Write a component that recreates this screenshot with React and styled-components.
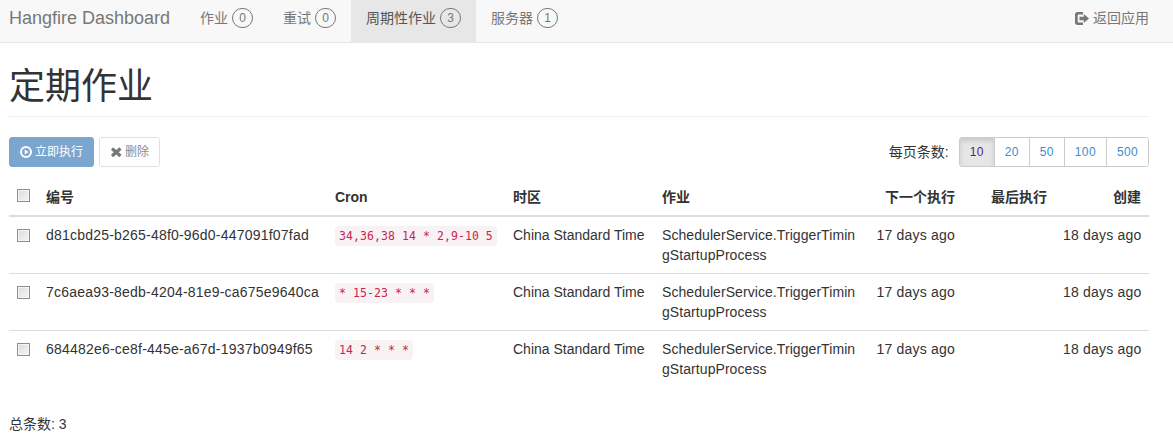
import React from 'react';
import styled, { createGlobalStyle } from 'styled-components';

const GlobalStyle = createGlobalStyle`
  html, body {
    margin: 0;
    padding: 0;
    background: #fff;
    color: #333;
    font-family: "Liberation Sans", "Noto Sans CJK SC", sans-serif;
    font-size: 14px;
    line-height: 20px;
  }
  * {
    box-sizing: border-box;
  }
`;

const navItems = [
  { label: '作业', count: 0 },
  { label: '重试', count: 0 },
  { label: '周期性作业', count: 3, active: true },
  { label: '服务器', count: 1 },
];

const pageSizes = [10, 20, 50, 100, 500];

const jobs = [
  { id: 'd81cbd25-b265-48f0-96d0-447091f07fad', cron: '34,36,38 14 * 2,9-10 5' },
  { id: '7c6aea93-8edb-4204-81e9-ca675e9640ca', cron: '* 15-23 * * *' },
  { id: '684482e6-ce8f-445e-a67d-1937b0949f65', cron: '14 2 * * *' },
];

const LogOutIcon = () => (
  <svg width="14" height="13" viewBox="0 0 14 13" fill="#777">
    <path d="M0 2.500C0 1.100 1.100 0 2.500 0H8v2.500H3.500C3 2.500 2.700 2.800 2.700 3.300v6.400c0 .5.3.8.8.8H8V13H2.500C1.100 13 0 11.900 0 10.500z" />
    <path d="M4.500 4.700h4.300V2L14 6.500 8.800 11V8.300H4.500z" />
  </svg>
);

const PlayCircleIcon = () => (
  <svg width="12" height="12" viewBox="0 0 12 12">
    <circle cx="6" cy="6" r="5" fill="none" stroke="#fff" strokeWidth="2" />
    <path d="M4.600 3.400 8.600 6l-4 2.600z" fill="#fff" />
  </svg>
);

const RemoveIcon = () => (
  <svg width="12" height="12" viewBox="0 0 12 12">
    <path d="M2 2.500 10.500 10M10.500 2.500 2 10" fill="none" stroke="#777" strokeWidth="3.200" />
  </svg>
);

export default function App() {
  return (
    <>
      <GlobalStyle />
      <Navbar>
        <Brand>Hangfire Dashboard</Brand>
        <NavList>
          {navItems.map((item) => (
            <NavItem key={item.label} $active={item.active}>
              {item.label}
              <Badge>{item.count}</Badge>
            </NavItem>
          ))}
        </NavList>
        <BackLink>
          <LogOutIcon />
          返回应用
        </BackLink>
      </Navbar>

      <Page>
        <Title>定期作业</Title>

        <Toolbar>
          <PrimaryButton>
            <PlayCircleIcon />
            立即执行
          </PrimaryButton>
          <DefaultButton>
            <RemoveIcon />
            删除
          </DefaultButton>
          <PageSizer>
            <PageSizeLabel>每页条数:</PageSizeLabel>
            <PageSizeGroup>
              {pageSizes.map((size) => (
                <PageSizeButton key={size} $active={size === 10}>
                  {size}
                </PageSizeButton>
              ))}
            </PageSizeGroup>
          </PageSizer>
        </Toolbar>

        <Table>
          <colgroup>
            <col width="29" />
            <col width="289" />
            <col width="178" />
            <col width="149" />
            <col width="210" />
            <col width="99" />
            <col width="92" />
            <col width="94" />
          </colgroup>
          <thead>
            <tr>
              <Th><Check /></Th>
              <Th>编号</Th>
              <Th>Cron</Th>
              <Th>时区</Th>
              <Th>作业</Th>
              <Th $right>下一个执行</Th>
              <Th $right>最后执行</Th>
              <Th $right>创建</Th>
            </tr>
          </thead>
          <tbody>
            {jobs.map((job) => (
              <tr key={job.id}>
                <Td><Check /></Td>
                <IdCell>{job.id}</IdCell>
                <Td><Code>{job.cron}</Code></Td>
                <Td>China Standard Time</Td>
                <JobCell>SchedulerService.TriggerTimingStartupProcess</JobCell>
                <AgoCell $right>17 days ago</AgoCell>
                <Td $right></Td>
                <AgoCell $right>18 days ago</AgoCell>
              </tr>
            ))}
          </tbody>
        </Table>

        <Total>总条数: 3</Total>
      </Page>
    </>
  );
}

const Navbar = styled.nav`
  display: flex;
  align-items: stretch;
  height: 43px;
  padding: 0 9px;
  background: #f8f8f8;
  border-bottom: 1px solid #e7e7e7;
`;

const Brand = styled.a`
  display: flex;
  align-items: center;
  margin-right: 15px;
  padding-bottom: 6px;
  font-size: 18px;
  color: #777;
`;

const NavList = styled.ul`
  display: flex;
  margin: 0;
  padding: 0;
  list-style: none;
`;

const NavItem = styled.li`
  display: flex;
  align-items: center;
  padding: 0 15px 6px;
  color: ${(p) => (p.$active ? '#555' : '#777')};
  background: ${(p) => (p.$active ? '#e7e7e7' : 'transparent')};
`;

const Badge = styled.span`
  display: inline-flex;
  justify-content: center;
  align-items: center;
  min-width: 21px;
  height: 20px;
  margin-left: 4px;
  padding: 0 4px;
  border: 1px solid #777;
  border-radius: 10px;
  font-size: 12px;
  color: #777;
`;

const BackLink = styled.a`
  display: flex;
  align-items: center;
  gap: 4px;
  margin-left: auto;
  padding: 0 15px 6px;
  color: #777;
`;

const Page = styled.main`
  padding: 0 24px 0 9px;
`;

const Title = styled.h1`
  margin: 22px 0 20px;
  padding-bottom: 7px;
  border-bottom: 1px solid #eee;
  font-size: 36px;
  font-weight: 400;
  line-height: 44px;
  color: #333;
`;

const Toolbar = styled.div`
  display: flex;
  align-items: center;
  gap: 5px;
  height: 30px;
`;

const PrimaryButton = styled.button`
  display: inline-flex;
  align-items: center;
  gap: 3px;
  height: 30px;
  padding: 0 10px;
  border: 1px solid #7aa6cf;
  border-radius: 3px;
  background: #7aa6cf;
  color: #fff;
  font: inherit;
  font-size: 12px;
`;

const DefaultButton = styled.button`
  display: inline-flex;
  align-items: center;
  gap: 3px;
  height: 30px;
  padding: 0 10px;
  border: 1px solid #e0e0e0;
  border-radius: 3px;
  background: #fff;
  color: #8a8a8a;
  font: inherit;
  font-size: 12px;
`;

const PageSizer = styled.div`
  display: flex;
  align-items: center;
  gap: 10px;
  margin-left: auto;
`;

const PageSizeLabel = styled.span`
  font-size: 14px;
  color: #333;
`;

const PageSizeGroup = styled.div`
  display: flex;
  height: 30px;
  border: 1px solid #ccc;
  border-radius: 3px;
  overflow: hidden;
`;

const PageSizeButton = styled.a`
  display: flex;
  justify-content: center;
  align-items: center;
  padding: 0 10px;
  font-size: 12px;
  letter-spacing: 0.35px;
  color: ${(p) => (p.$active ? '#551a8b' : '#428bca')};
  background: ${(p) => (p.$active ? '#e6e6e6' : '#fff')};
  box-shadow: ${(p) => (p.$active ? 'inset 0 3px 5px rgba(0, 0, 0, 0.125)' : 'none')};
  & + & {
    border-left: 1px solid #ccc;
  }
`;

const Table = styled.table`
  width: 1140px;
  margin-top: 10px;
  table-layout: fixed;
  border-collapse: collapse;
`;

const Check = styled.input.attrs({ type: 'checkbox' })`
  appearance: none;
  display: block;
  width: 13px;
  height: 13px;
  margin: 4px 0 0;
  border: 1px solid #8e8f8f;
  background: linear-gradient(135deg, #dcdcdc, #f6f6f6);
  box-shadow: inset 0 0 0 1px #f4f4f4;
`;

const Th = styled.th`
  height: 39px;
  padding: 9px 8px 7px;
  border-bottom: 2px solid #ddd;
  text-align: ${(p) => (p.$right ? 'right' : 'left')};
  font-size: 14px;
  font-weight: 700;
  vertical-align: middle;

  ${Check} {
    margin-top: -4px;
  }
`;

const Td = styled.td`
  padding: 8px;
  border-top: 1px solid #ddd;
  text-align: ${(p) => (p.$right ? 'right' : 'left')};
  vertical-align: top;
`;

const IdCell = styled(Td)`
  letter-spacing: 0.21px;
`;

const JobCell = styled(Td)`
  word-break: break-all;
  letter-spacing: 0.07px;
`;

const AgoCell = styled(Td)`
  white-space: nowrap;
  letter-spacing: 0.2px;
`;

const Code = styled.code`
  display: inline-block;
  padding: 2px 4px;
  border-radius: 4px;
  background: #f9f2f4;
  color: #c7254e;
  font-family: "DejaVu Sans Mono", "Liberation Mono", monospace;
  font-size: 11.5px;
  letter-spacing: 0.07px;
  line-height: 16px;
`;

const Total = styled.p`
  margin: 27px 0 0;
  font-size: 14px;
`;
